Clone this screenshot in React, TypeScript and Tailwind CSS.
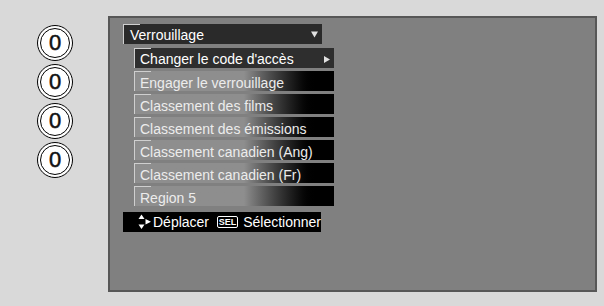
import React from 'react';

const items = [
  'Engager le verrouillage',
  'Classement des films',
  'Classement des émissions',
  'Classement canadien (Ang)',
  'Classement canadien (Fr)',
  'Region 5',
];

const Bracket: React.FC = () => (
  <>
    <span className="absolute left-0 top-0 h-full w-px bg-[#cfcfcf]" />
    <span className="absolute left-0 top-0 h-px w-[17px] bg-[#cfcfcf]" />
  </>
);

const Digit: React.FC = () => (
  <div className="w-[36px] h-[36px] rounded-full border-[1.5px] border-black bg-white p-[2px]">
    <div className="w-full h-full rounded-full border-[1.5px] border-black flex items-center justify-center text-[22px] leading-none text-[#111] [-webkit-text-stroke:0.5px_#111]">
      0
    </div>
  </div>
);

const App: React.FC = () => {
  return (
    <div
      className="w-[604px] h-[306px] bg-[#d9d9d9] flex"
      style={{ fontFamily: '"Liberation Sans", Arial, sans-serif' }}
    >
      <div className="w-[108px] pt-[25px] pl-[37px] flex flex-col gap-[3px]">
        <Digit />
        <Digit />
        <Digit />
        <Digit />
      </div>

      <div className="mt-[16px] w-[489px] h-[276px] bg-[#808080] border-2 border-[#575757] pl-[13px] pt-[6px]">
        <div className="relative w-[199px] h-[20px] bg-[#2a2a2a] text-white text-[14px] leading-[20px] pl-[7px] pt-px flex items-center justify-between pr-[3px]">
          <Bracket />
          <span>Verrouillage</span>
          <svg width="7" height="7" viewBox="0 0 7 7" className="mr-px">
            <path d="M0 0.5 L7 0.5 L3.5 6.5 Z" fill="#e0e0e0" />
          </svg>
        </div>

        <div className="ml-[11px] mt-[4px] flex flex-col gap-[3px]">
          <div className="relative w-[200px] h-[20px] bg-[#2e2e2e] text-white text-[14px] leading-[20px] pl-[6px] pt-[2px] pr-[3px] flex items-center justify-between">
            <Bracket />
            <span>Changer le code d'accès</span>
            <svg width="6" height="7" viewBox="0 0 6 7" className="mr-px">
              <path d="M0 0 L6 3.5 L0 7 Z" fill="#e0e0e0" />
            </svg>
          </div>
          {items.map(label => (
            <div
              key={label}
              className="relative w-[200px] h-[20px] bg-linear-to-r from-[#8e8e8e] from-55% to-black to-92% text-[#ececec] text-[14px] leading-[20px] pl-[6px] pt-[2px]"
            >
              <Bracket />
              <span>{label}</span>
            </div>
          ))}
        </div>

        <div className="mt-[6px] w-[198px] h-[20px] bg-black text-white text-[14px] leading-[20px] pl-[15px] flex items-center">
          <svg width="14" height="16" viewBox="0 0 14 16" className="shrink-0">
            <path d="M0.5 5 L3.5 0.5 L6.5 5 Z" fill="#fff" />
            <path d="M0.5 10.5 L6.5 10.5 L3.5 15 Z" fill="#fff" />
            <path d="M7.5 5 L13 7.7 L7.5 10.5 Z" fill="#fff" />
          </svg>
          <span className="ml-[1px]">Déplacer</span>
          <span className="ml-[8px] w-[23px] h-[12px] border border-white rounded-[2px] flex items-center justify-center text-[9px] font-bold leading-none">
            SEL
          </span>
          <span className="ml-[5px]">Sélectionner</span>
        </div>
      </div>
    </div>
  );
};

export default App;
